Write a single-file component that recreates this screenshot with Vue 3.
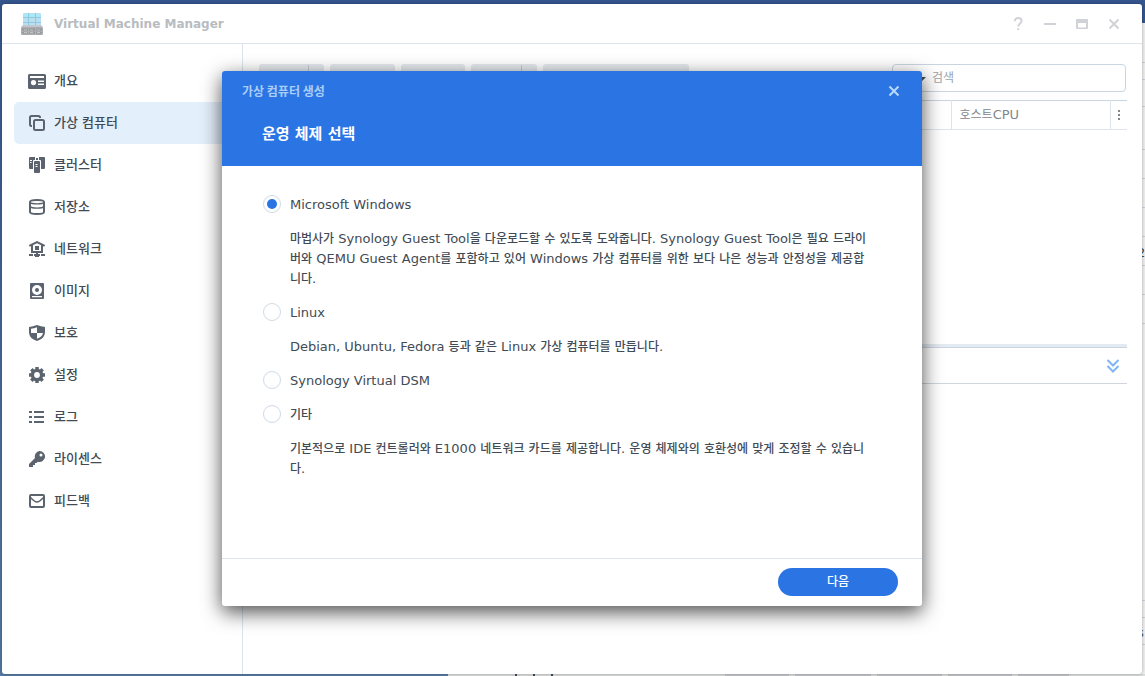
<script setup>
import { ref, h } from 'vue'

const nav = [
  { id: 'overview', label: '개요' },
  { id: 'vm', label: '가상 컴퓨터' },
  { id: 'cluster', label: '클러스터' },
  { id: 'storage', label: '저장소' },
  { id: 'network', label: '네트워크' },
  { id: 'image', label: '이미지' },
  { id: 'protection', label: '보호' },
  { id: 'settings', label: '설정' },
  { id: 'log', label: '로그' },
  { id: 'license', label: '라이센스' },
  { id: 'feedback', label: '피드백' },
]
const active = ref('vm')

const options = [
  {
    id: 'windows',
    label: 'Microsoft Windows',
    text: '마법사가 Synology Guest Tool을 다운로드할 수 있도록 도와줍니다. Synology Guest Tool은 필요 드라이버와 QEMU Guest Agent를 포함하고 있어 Windows 가상 컴퓨터를 위한 보다 나은 성능과 안정성을 제공합니다.',
  },
  { id: 'linux', label: 'Linux', text: 'Debian, Ubuntu, Fedora 등과 같은 Linux 가상 컴퓨터를 만듭니다.' },
  { id: 'vdsm', label: 'Synology Virtual DSM' },
  { id: 'other', label: '기타', text: '기본적으로 IDE 컨트롤러와 E1000 네트워크 카드를 제공합니다. 운영 체제와의 호환성에 맞게 조정할 수 있습니다.' },
]
const os = ref('windows')

// Hangul is set one size smaller than the Latin text beside it.
const MixedText = (props) =>
  props.text
    .split(/([가-힣]+)/)
    .filter(Boolean)
    .map((run) => (/[가-힣]/.test(run) ? h('span', { class: 'hangul' }, run) : run))
MixedText.props = ['text']
</script>

<template>
  <div class="desktop">
    <div class="back-window" aria-hidden="true">
      <div class="back-side">
        <i class="r39"></i><i class="r17"></i><i class="r27"></i><i class="r43"></i>
        <i class="r29"></i><i class="r29"></i><i class="r29"></i><i class="r29"><b>2</b></i>
        <i class="r29"></i><i class="r29"><b>.</b></i><i class="rest"></i><i class="r17"></i>
        <i class="r27"><b>s</b></i>
      </div>
      <div class="back-tools">
        <span class="marks"><em></em><em></em><em></em></span>
        <i class="w64"></i><i class="w76"></i><i class="w65"></i><i class="w64"></i><i class="w51"></i>
      </div>
    </div>

    <div class="window">
      <header class="titlebar">
        <svg class="logo" viewBox="0 0 24 24" width="24" height="24" aria-hidden="true">
          <rect x="3" y="1" width="18" height="14" rx="1" fill="#b9dff0" />
          <path d="M3 5.500h18M3 10.500h18M8.500 1v14M15.500 1v14" stroke="#90c8df" stroke-width="1" />
          <path d="M4 2h4v3H4zM9.500 2h5v3h-5zM16.500 2h4v3h-4z" fill="#a5eaf8" />
          <path d="M3 13h18l2 2.500V22q0 1-1 1H2q-1 0-1-1v-6.500z" fill="#a9acb2" />
          <path d="M3 13h18l1.500 2h-21z" fill="#c3c6ca" />
          <path d="M2.500 16.500h19v5h-19z" fill="#94979c" />
          <path d="M4 18h3M10 18h3M17 18h3M4 20.500h3M10 20.500h3M17 20.500h3" stroke="#c5c9bd" stroke-width="1.200" />
          <path d="M8.500 16v6M15.500 16v6M2 19.200h20" stroke="#b0b3b8" />
        </svg>
        <h1>Virtual Machine Manager</h1>
        <div class="controls">
          <button aria-label="도움말"><svg viewBox="0 0 16 16"><path d="M4.800 5.200c0-4.300 6.800-4 6.800-.200 0 2.400-3.300 2.600-3.300 5.400" /><path d="M8.300 12.200v1.900" /></svg></button>
          <button aria-label="최소화"><svg viewBox="0 0 16 16"><path d="M2 8h12" /></svg></button>
          <button aria-label="최대화"><svg viewBox="0 0 16 16"><path class="solid" fill-rule="evenodd" d="M3 3h10q1 0 1 1v8q0 1-1 1H3q-1 0-1-1V4q0-1 1-1zM4 7v4.500h8V7z" /></svg></button>
          <button aria-label="닫기"><svg viewBox="0 0 16 16"><path d="M3.500 3.500l9 9M12.500 3.500l-9 9" /></svg></button>
        </div>
      </header>

      <nav class="sidebar">
        <a v-for="n in nav" :key="n.id" href="#" :class="{ active: active === n.id }" @click.prevent="active = n.id">
          <svg class="icon" viewBox="0 0 18 18" width="18" height="18" aria-hidden="true">
            <g v-if="n.id === 'overview'">
              <path fill-rule="evenodd" d="M1.500 2h15A1.500 1.500 0 0 1 18 3.500v12a1.500 1.500 0 0 1-1.500 1.500h-15A1.500 1.500 0 0 1 0 15.500v-12A1.500 1.500 0 0 1 1.500 2zM2 4v2h14V4zM10 8.500V10h6V8.500zM10 11.500V13h6v-1.500zM5.500 8a2.600 2.600 0 1 0 0 5.200 2.600 2.600 0 0 0 0-5.200z" />
            </g>
            <g v-else-if="n.id === 'vm'" class="line">
              <path d="M4 12H3.500A1.500 1.500 0 0 1 2 10.500v-7A1.500 1.500 0 0 1 3.500 2h7A1.500 1.500 0 0 1 12 3.500V4" />
              <rect x="6" y="6" width="10" height="10" rx="1.500" />
            </g>
            <g v-else-if="n.id === 'cluster'">
              <path d="M2 1h5v3H6q-1 0-1 1v8H2q-1 0-1-1V2q0-1 1-1zM11 1h5q1 0 1 1v10q0 1-1 1h-3V5q0-1-1-1h-1zM8 2h2v2H8z" />
              <rect x="6" y="5" width="6" height="12" rx="1" />
              <path class="cut" d="M2 4.500h2M2 6.500h1.500M7.500 8.500h2M7.500 10.500h2" />
            </g>
            <g v-else-if="n.id === 'storage'" class="line">
              <path d="M2 4v10c0 2.600 14 2.600 14 0V4c0-2.600-14-2.600-14 0z" />
              <path class="thin" d="M2 4.500c1.500 1.800 12.500 1.800 14 0M2 8.500c1.500 2.200 12.500 2.200 14 0" />
            </g>
            <g v-else-if="n.id === 'network'">
              <path class="line" d="M1.300 5.800L9 2l7.700 3.800M4 5v7h10V5" />
              <rect x="7" y="6" width="4" height="4" />
              <path d="M1 14h4v2H1zM6 14h2v-1h2v1h2v2h-1v1H7v-1H6zM13 14h4v2h-4z" />
            </g>
            <g v-else-if="n.id === 'image'">
              <path fill-rule="evenodd" d="M3 1h12a1 1 0 0 1 1 1v14a1 1 0 0 1-1 1H3a1 1 0 0 1-1-1V2a1 1 0 0 1 1-1zM9 3a5 5 0 1 0 0 10A5 5 0 0 0 9 3zM4 14v1.200h10V14z" />
              <circle cx="9" cy="8" r="2" />
            </g>
            <g v-else-if="n.id === 'protection'">
              <path fill-rule="evenodd" d="M9 1q4 1.500 8 2v5c0 4.500-3.200 7.500-8 9C4.200 15.500 1 12.500 1 8V3q4-.500 8-2zM9 3.200Q6 4.300 3 4.700V9h6zM9 9v5.800c3.200-1.200 5.600-3 6-5.800z" />
            </g>
            <g v-else-if="n.id === 'settings'">
              <circle class="ring" cx="9" cy="9" r="4.600" />
              <path class="teeth" d="M9 1v3M9 14v3M1 9h3M14 9h3M3.300 3.300l2.200 2.200M12.500 12.500l2.200 2.200M14.700 3.300l-2.200 2.200M5.500 12.500l-2.200 2.200" />
            </g>
            <g v-else-if="n.id === 'log'">
              <path d="M1 3h3v2H1zM6 3h10v2H6zM1 8h3v2H1zM6 8h10v2H6zM1 13h3v2H1zM6 13h10v2H6z" />
            </g>
            <g v-else-if="n.id === 'license'">
              <path fill-rule="evenodd" d="M11.500 1a5.500 5.500 0 1 1-1.700 10.700L8.500 13H7v2H5v2H1v-3l6-6A5.500 5.500 0 0 1 11.500 1zM13 3.500a1.500 1.500 0 1 0 0 3 1.500 1.500 0 0 0 0-3z" />
            </g>
            <g v-else class="line">
              <rect x="2" y="3" width="14" height="12" rx="1" />
              <path class="thin" d="M2.500 5.500c3 3.300 5 4.500 6.500 4.500s3.500-1.200 6.500-4.500" />
            </g>
          </svg>
          <span>{{ n.label }}</span>
        </a>
      </nav>

      <main class="main">
        <div class="toolbar">
          <i class="tool split w65"></i><i class="tool w65"></i><i class="tool w64"></i><i class="tool split w66"></i><i class="tool w146"></i>
          <label class="search">
            <svg viewBox="0 0 34 12" width="34" height="12" aria-hidden="true"><circle cx="13" cy="5" r="4" fill="none" stroke="#414b55" /><path d="M25 5h8l-4 4z" fill="#414b55" /></svg>
            <input type="text" placeholder="검색" aria-label="검색" />
          </label>
        </div>
        <table class="grid">
          <thead>
            <tr><th class="fill"></th><th class="host"><MixedText text="호스트CPU" /></th><th class="more"><button aria-label="열 선택"><i></i><i></i><i></i></button></th></tr>
          </thead>
        </table>
        <div class="rows"></div>
        <div class="detail">
          <button aria-label="접기">
            <svg viewBox="0 0 14 14" width="14" height="14"><path d="M1.500 1L7 6.500 12.500 1M1.500 7L7 12.500 12.500 7" /></svg>
          </button>
        </div>
      </main>

      <div class="overlay">
        <form class="dialog" role="dialog" aria-labelledby="wizard-title" @submit.prevent>
          <header>
            <div class="caption">
              <span id="wizard-title">가상 컴퓨터 생성</span>
              <button type="button" aria-label="닫기"><svg viewBox="0 0 12 12" width="12" height="12"><path d="M1.500 1.500l9 9M10.500 1.500l-9 9" /></svg></button>
            </div>
            <h2>운영 체제 선택</h2>
          </header>
          <div class="body">
            <div v-for="o in options" :key="o.id" class="option">
              <label><input v-model="os" type="radio" name="os" :value="o.id" /><span><MixedText :text="o.label" /></span></label>
              <p v-if="o.text"><MixedText :text="o.text" /></p>
            </div>
          </div>
          <footer><button type="submit">다음</button></footer>
        </form>
      </div>
    </div>
  </div>
</template>

<style>
body {
  margin: 0;
}
.hangul {
  font-size: 12px;
}
</style>

<style scoped>
* {
  box-sizing: border-box;
}
.desktop {
  position: relative;
  display: flex;
  min-height: 100vh;
  padding: 4px 3px 2px 2px;
  overflow: hidden;
  background: linear-gradient(#35568f, #567ba5);
  color: #414b55;
  font: 500 13px/20px "DejaVu Sans", "Noto Sans CJK KR", sans-serif;
}
button {
  border: 0;
  padding: 0;
  background: none;
  font: inherit;
  cursor: pointer;
}
.back-window {
  position: absolute;
  inset: 23px 0 0 448px;
  display: flex;
  flex-direction: column;
  background: #dcdddd;
}
.back-side {
  flex: 1;
  display: flex;
  flex-direction: column;
  align-self: flex-end;
  width: 3px;
  padding-bottom: 29px;
  overflow: hidden;
  background: #f1f1f1;
}
.back-side i {
  display: flex;
  align-items: center;
  border-bottom: 1px solid #cdd3d9;
}
.back-side b {
  margin: 4px 0 0 -5px;
  font: 13px/20px "DejaVu Sans", sans-serif;
}
.r39 { height: 40px; }
.r17 { height: 17px; }
.r27 { height: 27px; }
.r43 { height: 43px; }
.r29 { height: 29px; }
.rest { flex: 1; }
.back-tools {
  display: flex;
  gap: 6px;
  height: 2px;
}
.back-tools i {
  background: #c3c7cb;
}
.marks {
  display: flex;
  gap: 16px;
  width: 271px;
  padding-left: 67px;
}
.marks em {
  width: 2px;
  background: #414b55;
}
.w51 { width: 51px; }
.w64 { width: 64px; }
.w65 { width: 65px; }
.w66 { width: 66px; }
.w76 { width: 76px; }
.w146 { width: 146px; }

.window {
  position: relative;
  flex: 1;
  display: grid;
  grid-template: 40px 1fr / 241px 1fr;
  border-radius: 3px;
  background: #fff;
  box-shadow: 0 0 4px rgba(0, 0, 0, 0.3);
}
.titlebar {
  grid-column: 1 / -1;
  display: flex;
  align-items: center;
  padding: 0 20px 0 18px;
  border-bottom: 1px solid #dde4eb;
}
.titlebar h1 {
  flex: 1;
  margin: 0 0 0 10px;
  color: #b8bcc0;
  font: bold 12px/20px "DejaVu Sans", sans-serif;
}
.controls {
  display: flex;
  gap: 16px;
}
.controls button {
  width: 16px;
  height: 16px;
}
.controls svg {
  display: block;
  fill: none;
  stroke: #d0d2d7;
  stroke-width: 2;
}
.controls .solid {
  fill: #d0d2d7;
  stroke: none;
}
.sidebar {
  display: flex;
  flex-direction: column;
  padding: 16px 12px;
  border-right: 1px solid #dde4eb;
}
.sidebar a {
  display: flex;
  align-items: center;
  gap: 8px;
  height: 42px;
  padding-left: 14px;
  border-radius: 5px;
  color: #414b55;
  text-decoration: none;
}
.sidebar a.active {
  background: #e3effb;
}
.icon {
  fill: #5b636e;
}
.icon .line {
  fill: none;
  stroke: #5b636e;
  stroke-width: 2;
}
.icon .thin {
  stroke-width: 1.4;
}
.icon .cut {
  stroke: #fff;
  stroke-width: 1;
}
.icon .ring {
  fill: none;
  stroke: #5b636e;
  stroke-width: 3.4;
}
.icon .teeth {
  stroke: #5b636e;
  stroke-width: 3.4;
}
.main {
  display: flex;
  flex-direction: column;
  padding: 20px 15px 0 16px;
}
.toolbar {
  display: flex;
  gap: 6px;
  height: 28px;
  margin-right: 1px;
}
.tool {
  position: relative;
  border-radius: 3px;
  background: #e6eaee;
}
.tool.split::after {
  position: absolute;
  inset: 1px 15px 1px auto;
  border-left: 1px solid #c3cbd4;
  content: "";
}
.search {
  display: flex;
  align-items: center;
  width: 234px;
  margin-left: auto;
  border: 1px solid #cad5e2;
  border-radius: 4px;
}
.search input {
  flex: 1;
  min-width: 0;
  margin-left: 5px;
  padding: 0;
  border: 0;
  outline: 0;
  background: none;
  font: 12px/20px "DejaVu Sans", "Noto Sans CJK KR", sans-serif;
}
.search input::placeholder {
  color: #9da3aa;
}
.grid {
  width: 100%;
  margin-top: 8px;
  border-collapse: collapse;
  table-layout: fixed;
  border-top: 1px solid #cad5e2;
  border-bottom: 1px solid #dde4eb;
}
.grid th {
  height: 29px;
  padding: 0;
  color: #7f868d;
  font-weight: 400;
  text-align: left;
}
.grid .host {
  width: 159px;
  padding-left: 8px;
  border-left: 1px solid #dde4eb;
}
.grid .more {
  width: 17px;
  border-left: 1px solid #dde4eb;
}
.more button {
  display: grid;
  gap: 2px;
  margin: 0 auto;
}
.more i {
  width: 2px;
  height: 2px;
  background: #7f868d;
}
.rows {
  height: 214px;
}
.detail {
  display: flex;
  justify-content: flex-end;
  height: 40px;
  padding: 12px 7px 0 0;
  border-top: 3px solid #e4eaf1;
  border-bottom: 1px solid #cfd6df;
  box-shadow: inset 0 1px #cad5e2;
}
.detail button {
  width: 14px;
  height: 14px;
}
.detail svg {
  display: block;
  fill: none;
  stroke: #7eb5f4;
  stroke-width: 2;
}
.overlay {
  position: absolute;
  inset: 0 0 1px;
  display: grid;
  place-items: center;
}
.dialog {
  width: 700px;
  max-width: 100%;
  border-radius: 3px;
  background: #fff;
  box-shadow: 0 6px 20px rgba(0, 0, 0, 0.7);
}
.dialog header {
  height: 95px;
  padding: 10px 20px 0;
  border-radius: 3px 3px 0 0;
  background: #2a75e3;
}
.caption {
  display: flex;
  align-items: center;
  justify-content: space-between;
  color: #a9cdf7;
  font: bold 12px/20px "Noto Sans CJK KR", sans-serif;
}
.caption button {
  width: 16px;
  height: 20px;
}
.caption svg {
  display: block;
  margin: 0 auto;
  fill: none;
  stroke: #b8d9fa;
  stroke-width: 2;
}
.dialog h2 {
  margin: 22px 0 0 20px;
  color: #fff;
  font-size: 15px;
  line-height: 22px;
}
.body {
  min-height: 392px;
  padding: 29px 40px 28px;
}
.option label {
  display: flex;
  align-items: flex-start;
  gap: 9px;
  margin-bottom: 14px;
}
.option input {
  display: grid;
  place-items: center;
  width: 18px;
  height: 18px;
  margin: 0 0 0 1px;
  border: 1px solid #cfdae6;
  border-radius: 50%;
  appearance: none;
}
.option input:checked::before {
  width: 10px;
  height: 10px;
  border-radius: 50%;
  background: #2a75e3;
  content: "";
}
.option p {
  margin: 0 12px 14px 28px;
}
.dialog footer {
  display: flex;
  justify-content: flex-end;
  padding: 9px 24px 10px;
  border-top: 1px solid #dde4eb;
}
.dialog footer button {
  width: 120px;
  height: 28px;
  border-radius: 14px;
  background: #2a75e3;
  color: #fff;
  font-size: 12px;
}
</style>
